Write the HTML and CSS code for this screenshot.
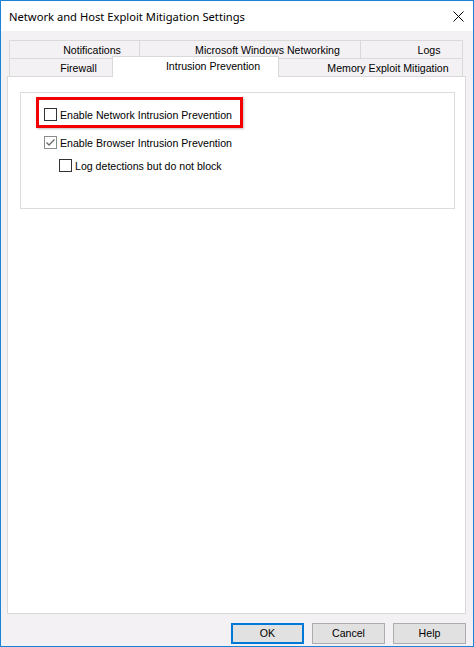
FILE: index.html
```html
<!DOCTYPE html>
<html>
<head>
<meta charset="utf-8">
<title>Network and Host Exploit Mitigation Settings</title>
<link rel="stylesheet" href="styles.css">
</head>
<body>
<div class="window">
  <div class="titlebar">
    <span class="title">Network and Host Exploit Mitigation Settings</span>
    <svg class="close" width="11" height="11" viewBox="0 0 11 11"><path d="M0.5 0.5 L10.5 10.5 M10.5 0.5 L0.5 10.5" stroke="#000" stroke-width="1" fill="none"/></svg>
  </div>
  <div class="content">
    <div class="tabs">
      <div class="tabrow">
        <div class="tab t-notif">Notifications</div>
        <div class="tab t-mwn">Microsoft Windows Networking</div>
        <div class="tab t-logs last">Logs</div>
      </div>
      <div class="tabrow">
        <div class="tab t-fw">Firewall</div>
        <div class="tab t-ips selected">Intrusion Prevention</div>
        <div class="tab t-mem last after-sel">Memory Exploit Mitigation</div>
      </div>
    </div>
    <div class="panel">
      <div class="group">
        <div class="highlight"></div>
        <label class="row r1"><span class="cb"></span><span class="lbl">Enable Network Intrusion Prevention</span></label>
        <label class="row r2"><span class="cb checked"><svg width="11" height="11" viewBox="0 0 11 11"><path d="M1.5 5.5 L4 8 L9.5 2.5" stroke="#6a6a6a" stroke-width="1.3" fill="none"/></svg></span><span class="lbl">Enable Browser Intrusion Prevention</span></label>
        <label class="row r3"><span class="cb"></span><span class="lbl">Log detections but do not block</span></label>
      </div>
    </div>
    <div class="footer">
      <div class="btn default">OK</div>
      <div class="btn">Cancel</div>
      <div class="btn">Help</div>
    </div>
  </div>
</div>
</body>
</html>
```
FILE: styles.css
```css
* { box-sizing: border-box; }
html, body { margin: 0; padding: 0; }
body { width: 474px; height: 647px; overflow: hidden; background: #fff; }

.window {
  width: 474px;
  height: 647px;
  border: 1px solid #1883d7;
  background: #f4f1f4;
  display: flex;
  flex-direction: column;
  font-family: "Liberation Sans", Arial, sans-serif;
  font-size: 10.6px;
  color: #000;
}

.titlebar {
  height: 30px;
  background: #fff;
  display: flex;
  align-items: center;
  padding-left: 8px;
  padding-right: 9px;
}
.title {
  flex: 1;
  font-family: "Noto Sans", "Open Sans", sans-serif;
  font-size: 11.2px;
  line-height: 16px;
  margin-top: 1px;
}
.close { display: block; margin-top: 1px; }

.content {
  flex: 1;
  display: flex;
  flex-direction: column;
  padding: 9px 7px 2px 6px;
}

.tabs { margin: 0 2px; }
.tabrow { display: flex; height: 18px; }
.tab {
  border-top: 1px solid #d9d9d9;
  border-left: 1px solid #d9d9d9;
  padding-left: 35px;
  text-align: center;
  line-height: 18px;
  white-space: nowrap;
  background: #f4f1f4;
}
.tab.last { border-right: 1px solid #d9d9d9; }
.t-notif { width: 130px; }
.t-mwn { width: 221px; }
.t-logs { width: 103px; }
.t-fw { width: 103px; }
.t-ips { width: 167px; }
.t-mem { width: 184px; }
.tab.after-sel { border-left: none; }
.tab.selected {
  position: relative;
  z-index: 2;
  background: #fff;
  border-right: 1px solid #d9d9d9;
  margin-top: -2px;
  height: 21px;
  line-height: 18px;
}

.panel {
  flex: 1;
  background: #fff;
  border: 1px solid #d9d9d9;
  padding: 15px 10px 0 12px;
}

.group {
  position: relative;
  height: 117px;
  border: 1px solid #dcdcdc;
  padding: 15px 0 0 23px;
}

.highlight {
  position: absolute;
  left: 15px;
  top: 4px;
  width: 207px;
  height: 31px;
  border: 3px solid #f30000;
  box-shadow: 1px 1px 2px rgba(0,0,0,0.25);
}

.row {
  display: flex;
  align-items: center;
  height: 13px;
  line-height: 14px;
  white-space: nowrap;
}
.r2 { margin-top: 15px; }
.r3 { margin-top: 10px; margin-left: 15px; }

.cb {
  width: 13px;
  height: 13px;
  border: 1px solid #333;
  background: #fff;
  flex: none;
  display: flex;
  align-items: center;
  justify-content: center;
}
.cb.checked { border-color: #8c8c8c; }
.cb svg { display: block; }
.lbl { margin-left: 3px; }

.footer {
  display: flex;
  justify-content: flex-end;
  gap: 8px;
  margin-top: 9px;
  margin-right: 0;
}
.btn {
  width: 73px;
  height: 21px;
  background: #e1e1e1;
  border: 1px solid #adadad;
  text-align: center;
  line-height: 19px;
}
.btn.default {
  border: 2px solid #0078d7;
  line-height: 17px;
}
```
